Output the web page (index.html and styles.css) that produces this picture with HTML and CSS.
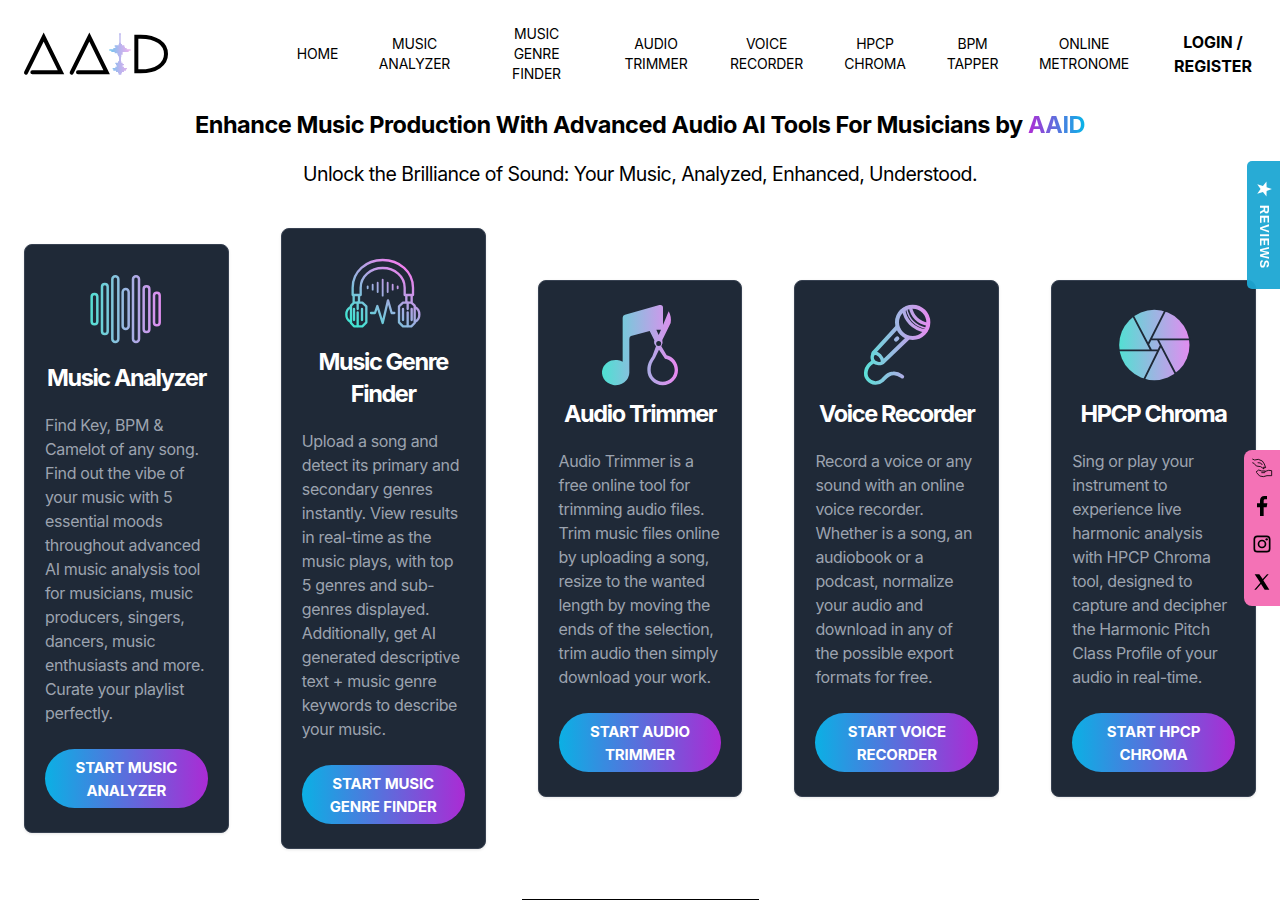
FILE: index.html
```html
<!DOCTYPE html>
<html lang="en">
<head>
  <meta charset="UTF-8">
  <meta name="viewport" content="width=device-width, initial-scale=1.0">
  <title>AAID - Audio AI Tools</title>
  <link rel="stylesheet" href="styles.css">
</head>
<body>
  <header class="header">
    <a href="#" class="logo" aria-label="AAID">
      <svg width="144" height="44" viewBox="42 36 432 132" fill="none">
        <defs>
          <linearGradient id="logo-wave" x1="298" y1="0" x2="362" y2="0" gradientUnits="userSpaceOnUse">
            <stop offset="0" stop-color="#6fc6ee"/>
            <stop offset=".5" stop-color="#b9b4ee"/>
            <stop offset="1" stop-color="#eeb4ee"/>
          </linearGradient>
        </defs>
        <g stroke="#000" stroke-width="12" stroke-linecap="round">
          <path d="M48 158 101 51 153 157H67"/>
          <path d="M185 158 238 51 290 157H204"/>
          <path d="M379 50V154H392C438 154 468 133 468 102S438 50 392 50Z" stroke-width="12"/>
        </g>
        <g stroke="url(#logo-wave)" stroke-width="4">
          <path d="M327.500 42H332.500M328 46H332M328 50H332M328 54H332M328 58H332M328 62H332M328 66H332M327 70H333M326 74H336M314 78H343M316 82H345M310 86H350M298 90H362M304 94H356M314 98H338M322 102H338M324 106H334M326 110H334M327 114H333M327 118H333M327 122H333M324 126H334M316 130H338M318 134H342M320 138H338M316 142H342M308 146H351M310 150H348M318 154H342M324 158H336M326 162H334"/>
        </g>
      </svg>
    </a>
    <nav class="nav">
      <a href="#">HOME</a>
      <a href="#">MUSIC<br>ANALYZER</a>
      <a href="#">MUSIC<br>GENRE<br>FINDER</a>
      <a href="#">AUDIO<br>TRIMMER</a>
      <a href="#">VOICE<br>RECORDER</a>
      <a href="#">HPCP<br>CHROMA</a>
      <a href="#">BPM<br>TAPPER</a>
      <a href="#">ONLINE<br>METRONOME</a>
      <a href="#" class="login">LOGIN /<br>REGISTER</a>
    </nav>
  </header>

  <main>
    <h1>Enhance Music Production With Advanced Audio AI Tools For Musicians by <span class="brand">AAID</span></h1>
    <p class="tagline">Unlock the Brilliance of Sound: Your Music, Analyzed, Enhanced, Understood.</p>

    <div class="cards">
      <div class="card">
        <svg class="icon" viewBox="19 12 240 240" fill="none">
          <linearGradient id="g1" x1="32" y1="0" x2="244" y2="0" gradientUnits="userSpaceOnUse">
            <stop offset="0" stop-color="#54dfd3"/><stop offset="1" stop-color="#e18df0"/>
          </linearGradient>
          <g stroke="url(#g1)" stroke-width="7.500">
            <rect x="36" y="87" width="17" height="91" rx="8.5"/>
            <rect x="67" y="57" width="17" height="150" rx="8.5"/>
            <rect x="98" y="34" width="18" height="197" rx="9"/>
            <rect x="129" y="72" width="18" height="120" rx="9"/>
            <rect x="160" y="34" width="18" height="197" rx="9"/>
            <rect x="192" y="64" width="17" height="137" rx="8.5"/>
            <rect x="223" y="83" width="17" height="98" rx="8.5"/>
          </g>
        </svg>
        <h2>Music Analyzer</h2>
        <p>Find Key, BPM &amp; Camelot of any song. Find out the vibe of your music with 5 essential moods throughout advanced AI music analysis tool for musicians, music producers, singers, dancers, music enthusiasts and more. Curate your playlist perfectly.</p>
        <a href="#" class="btn">START MUSIC ANALYZER</a>
      </div>

      <div class="card">
        <svg class="icon" viewBox="25 9 240 240" fill="none">
          <linearGradient id="g2" x1="60" y1="220" x2="205" y2="50" gradientUnits="userSpaceOnUse">
            <stop offset="0" stop-color="#43e3d2"/><stop offset="1" stop-color="#ef80ee"/>
          </linearGradient>
          <g stroke="url(#g2)" stroke-width="7" stroke-linejoin="round" stroke-linecap="round">
            <path d="M54 135V113C54 65 94 30 144 30S235 65 235 113V135H210V113C210 79 180 54 144 54S78 79 78 113V135Z"/>
            <path d="M57 137V155M73 137V155M215 137V155M231 137V155"/>
            <path d="M58 158H83L95 169V217L83 229H58L49 219V167Z"/>
            <path d="M47 172C31 180 31 207 47 215M58 177V210M69 187V228M69 158V177M82 177V210"/>
            <path d="M205 158H230L240 167V219L230 229H205L193 217V169Z"/>
            <path d="M242 172C258 180 258 207 242 215M205 177V210M219 187V228M219 158V177M231 177V210"/>
            <path d="M109 189H121L128 168 144 219 160 151 171 189H179"/>
            <path stroke-width="5.500" d="M99 109V115M114 104V119M129 98V126M144 89V137M159 98V126M174 104V119M189 109V115"/>
          </g>
        </svg>
        <h2>Music Genre Finder</h2>
        <p>Upload a song and detect its primary and secondary genres instantly. View results in real-time as the music plays, with top 5 genres and sub-genres displayed. Additionally, get AI generated descriptive text + music genre keywords to describe your music.</p>
        <a href="#" class="btn">START MUSIC GENRE FINDER</a>
      </div>

      <div class="card">
        <svg class="icon" viewBox="30 30 240 240" fill="none">
          <linearGradient id="g3" x1="36" y1="0" x2="264" y2="0" gradientUnits="userSpaceOnUse">
            <stop offset="0" stop-color="#4de1d2"/><stop offset="1" stop-color="#ea88f0"/>
          </linearGradient>
          <path fill="url(#g3)" d="M98 68Q98 61 105 59L208 30Q219 28 219 38V90L236 49Q245 65 242 84L217 135Q220 145 214 154L230 181C249 184 264 204 264 225A46 46 0 0 1 172 225C172 207 179 196 187 184L198 154Q190 146 193 136L179 108 123 123Q118 125 118 132V233A41 38 0 1 1 98 200ZM199 104 206 120 213 104ZM206 138A7.500 7.500 0 1 0 206 153 7.500 7.500 0 1 0 206 138ZM207 164 195 189C186 201 182 211 182 225A36 35 0 0 0 254 225C254 207 242 194 225 191Z" fill-rule="evenodd"/>
        </svg>
        <h2>Audio Trimmer</h2>
        <p>Audio Trimmer is a free online tool for trimming audio files. Trim music files online by uploading a song, resize to the wanted length by moving the ends of the selection, trim audio then simply download your work.</p>
        <a href="#" class="btn">START AUDIO TRIMMER</a>
      </div>

      <div class="card">
        <svg class="icon" viewBox="20 30 240 240" fill="none">
          <linearGradient id="g4" x1="42" y1="0" x2="240" y2="0" gradientUnits="userSpaceOnUse">
            <stop offset="0" stop-color="#5ae0d7"/><stop offset="1" stop-color="#e88bf0"/>
          </linearGradient>
          <g stroke="url(#g4)" stroke-width="12" stroke-linecap="round" stroke-linejoin="round">
            <circle cx="187" cy="82" r="47"/>
            <path stroke-width="10" d="M160 43C164 75 187 101 226 108M180 36C185 62 203 84 233 88"/>
            <path stroke-width="4" d="M169 42C175 70 194 93 228 100"/>
            <path d="M139 98 69 174M173 129 97 202"/>
            <path stroke-width="10" d="M70 174C61 188 66 202 82 205C90 207 96 205 97 200C96 186 84 173 70 174Z"/>
            <path d="M137 134 141 130"/>
            <path stroke-width="11" d="M66 202C45 216 41 239 53 253C65 267 84 267 96 256C108 244 114 235 129 235C142 234 149 240 156 245"/>
          </g>
        </svg>
        <h2>Voice Recorder</h2>
        <p>Record a voice or any sound with an online voice recorder. Whether is a song, an audiobook or a podcast, normalize your audio and download in any of the possible export formats for free.</p>
        <a href="#" class="btn">START VOICE RECORDER</a>
      </div>

      <div class="card">
        <svg class="icon" viewBox="26 15 240 240" fill="none">
          <linearGradient id="g5" x1="42" y1="0" x2="252" y2="0" gradientUnits="userSpaceOnUse">
            <stop offset="0" stop-color="#54dfd3"/><stop offset="1" stop-color="#e18df0"/>
          </linearGradient>
          <circle cx="147" cy="135" r="105.500" fill="url(#g5)"/>
          <path stroke="#1f2937" stroke-width="5.500" d="M83 47 137 150M180 31 129 132M256 118H138M211 222 157 118M116 239 167 135M38 151H157"/>
        </svg>
        <h2>HPCP Chroma</h2>
        <p>Sing or play your instrument to experience live harmonic analysis with HPCP Chroma tool, designed to capture and decipher the Harmonic Pitch Class Profile of your audio in real-time.</p>
        <a href="#" class="btn">START HPCP CHROMA</a>
      </div>
    </div>

    <hr class="divider">
  </main>

  <a href="#" class="reviews">
    <svg width="18" height="18" viewBox="0 0 24 24" fill="#fff"><path d="M22.500 12 15.500 14.500 15.300 22 10.600 16 3 18.200 7.400 12 3 5.800 10.600 8 15.300 2 15.500 9.500Z"/></svg>
    <span>REVIEWS</span>
  </a>

  <div class="social">
    <a href="#" aria-label="Support">
      <svg viewBox="48 54 60 60" fill="none" stroke="#000" stroke-width="2.500" stroke-linejoin="round">
        <path d="M49 57 56 60 67 58 79 63 85 72 89 83 83 81 84 87 74 80 61 78 54 70 49 68M65 68 74 69 79 75"/>
        <path d="M60 96 68 90 77 93H88L86 98H76M88 94 98 91 107 92M61 97 71 108 82 110 93 107H107V92"/>
      </svg>
    </a>
    <a href="#" aria-label="Facebook">
      <svg viewBox="48 168 60 60"><path d="M72 228V202H63V190H72V182C72 173 77 168 85 168H93V178H88C84 178 83 180 83 183V190H94L92 202H83V228Z"/></svg>
    </a>
    <a href="#" aria-label="Instagram">
      <svg viewBox="48 282 60 60" fill="none" stroke="#000" stroke-width="5">
        <rect x="55" y="289" width="46" height="46" rx="9"/>
        <circle cx="78" cy="312" r="10.500"/>
        <circle cx="92" cy="298" r="3.500" fill="#000" stroke="none"/>
      </svg>
    </a>
    <a href="#" aria-label="X">
      <svg viewBox="48 396 60 60"><path d="M56 403H70L80 417 93 403H98L82 421 100 449H86L75 432 60 449H55L73 428Z"/></svg>
    </a>
  </div>
</body>
</html>
```
FILE: styles.css
```css
* {
  margin: 0;
  padding: 0;
  box-sizing: border-box;
}

body {
  font-family: Inter, 'Liberation Sans', sans-serif;
  background-color: #fff;
  color: #000;
  height: 900px;
  overflow: hidden;
}

a {
  color: inherit;
  text-decoration: none;
}

svg {
  display: block;
  overflow: visible;
}

.header {
  display: flex;
  align-items: center;
  justify-content: space-between;
  height: 108px;
  padding: 0 24px;
}

.nav {
  display: grid;
  grid-template-columns: 41px 71px 91px 66px 73px 62px 51px 90px 86px;
  column-gap: 41px;
  align-items: center;
  justify-items: center;
  text-align: center;
  white-space: nowrap;
  font-size: 14px;
  line-height: 20px;
  letter-spacing: -0.22px;
}

.nav .login {
  font-size: 16px;
  line-height: 24px;
  font-weight: 700;
  letter-spacing: 0;
}

h1 {
  padding-top: 1px;
  text-align: center;
  font-size: 23.5px;
  line-height: 32px;
  font-weight: 700;
  letter-spacing: -0.45px;
  white-space: nowrap;
}

.brand {
  background: linear-gradient(to right, #b02bd4, #06b6e8);
  -webkit-background-clip: text;
  background-clip: text;
  color: transparent;
}

.tagline {
  margin-top: 19px;
  text-align: center;
  font-size: 19.5px;
  line-height: 28px;
  letter-spacing: -0.57px;
}

.cards {
  display: grid;
  grid-template-columns: repeat(5, 1fr);
  gap: 52px;
  align-items: center;
  margin: 40px 24px 0;
}

.card {
  padding: 24px 20px;
  background-color: #1f2937;
  border: 1px solid #374151;
  border-radius: 8px;
  box-shadow: 0 1px 3px rgba(0, 0, 0, 0.1);
}

.icon {
  width: 80px;
  height: 80px;
  margin: 0 auto 13px;
}

.card h2 {
  margin-bottom: 19px;
  text-align: center;
  color: #fff;
  font-size: 23.5px;
  line-height: 32px;
  font-weight: 650;
  letter-spacing: -1.4px;
}

.card p {
  color: #9ca3af;
  font-size: 16px;
  line-height: 24px;
  letter-spacing: -0.36px;
}

.btn {
  display: block;
  margin-top: 24px;
  padding: 7px 20px 6px;
  border-radius: 30px;
  background: linear-gradient(to right, #0bb0e4, #ab2bd4);
  color: #fff;
  text-align: center;
  font-size: 15px;
  line-height: 23px;
  font-weight: 700;
  letter-spacing: -0.14px;
}

.divider {
  width: 237px;
  margin: 50px auto 0;
  border: none;
  border-top: 1px solid #000;
}

/* Floating side tabs */
.reviews {
  position: fixed;
  top: 161px;
  right: 0;
  display: flex;
  flex-direction: column;
  align-items: center;
  gap: 7px;
  width: 33px;
  height: 128px;
  padding-top: 19px;
  border-radius: 5px 0 0 5px;
  background-color: rgba(28, 167, 211, 0.95);
  color: #fff;
}

.reviews span {
  writing-mode: vertical-rl;
  font-family: 'Liberation Sans', sans-serif;
  font-size: 12.5px;
  line-height: 16px;
  font-weight: 700;
  letter-spacing: 0.9px;
}

.social {
  position: fixed;
  top: 450px;
  right: 0;
  display: flex;
  flex-direction: column;
  gap: 18px;
  width: 36px;
  height: 156px;
  padding: 8px;
  border-radius: 8px 0 0 8px;
  background-color: #f472b6;
}

.social svg {
  width: 20px;
  height: 20px;
}
```
